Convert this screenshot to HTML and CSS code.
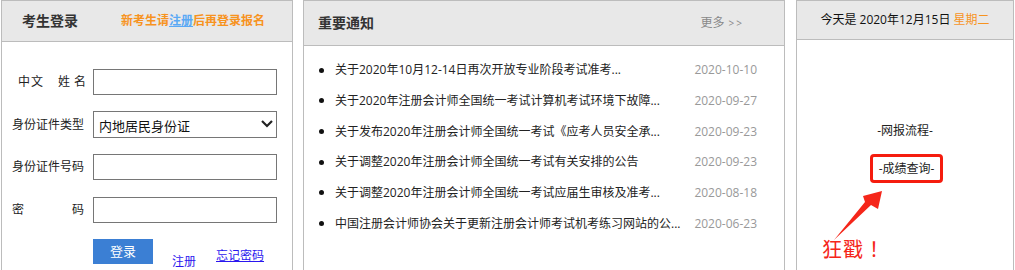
FILE: index.html
```html
<!DOCTYPE html>
<html lang="zh-CN">
<head>
<meta charset="utf-8">
<title>考生登录</title>
<link rel="stylesheet" href="styles.css">
</head>
<body>
<div class="page">
  <section class="panel p-login">
    <div class="hd hd-login">
      <span class="hd-title">考生登录</span>
      <span class="hd-tip">新考生请<a class="reg-link">注册</a>后再登录报名</span>
    </div>
    <form class="login-form">
      <div class="row">
        <label class="lbl lbl-name"><span>中</span><span class="c2">文</span><span class="c3">姓</span><span class="c4">名</span></label>
        <input class="field" type="text">
      </div>
      <div class="row row-sel">
        <label class="lbl">身份证件类型</label>
        <div class="sel-wrap">
          <select class="field sel"><option>内地居民身份证</option></select>
          <svg class="chev" width="14" height="9" viewBox="0 0 14 9"><polyline points="2,2 7,7 12,2" fill="none" stroke="#222" stroke-width="2.2"/></svg>
        </div>
      </div>
      <div class="row row-id">
        <label class="lbl">身份证件号码</label>
        <input class="field" type="text">
      </div>
      <div class="row">
        <label class="lbl lbl-pw"><span>密</span><span>码</span></label>
        <input class="field" type="password">
      </div>
      <div class="actions">
        <button class="btn" type="button">登录</button>
        <a class="lnk lnk-reg">注册</a>
        <a class="lnk lnk-forgot">忘记密码</a>
      </div>
    </form>
  </section>

  <section class="panel p-news">
    <div class="hd hd-news">
      <span class="hd-title">重要通知</span>
      <span class="more">更多 <span class="arrows">&gt;&gt;</span></span>
    </div>
    <ul class="news">
      <li><span class="t">关于2020年10月12-14日再次开放专业阶段考试准考...</span><span class="d">2020-10-10</span></li>
      <li><span class="t">关于2020年注册会计师全国统一考试计算机考试环境下故障...</span><span class="d">2020-09-27</span></li>
      <li><span class="t">关于发布2020年注册会计师全国统一考试《应考人员安全承...</span><span class="d">2020-09-23</span></li>
      <li><span class="t">关于调整2020年注册会计师全国统一考试有关安排的公告</span><span class="d">2020-09-23</span></li>
      <li><span class="t">关于调整2020年注册会计师全国统一考试应届生审核及准考...</span><span class="d">2020-08-18</span></li>
      <li><span class="t">中国注册会计师协会关于更新注册会计师考试机考练习网站的公...</span><span class="d">2020-06-23</span></li>
    </ul>
  </section>

  <section class="panel p-date">
    <div class="hd hd-date">今天是 2020年12月15日&nbsp;<span class="wk">星期二</span></div>
    <div class="flow">
      <div class="flow-item">-网报流程-</div>
      <div class="flow-item flow-hl"><span class="hl-box">-成绩查询-</span></div>
    </div>
    <svg class="arrow" width="218" height="270" viewBox="0 0 218 270">
      <polygon points="38,240 69,202 67,196 86,191 82,209 75,205" fill="#f5261a"/>
    </svg>
    <div class="poke">狂戳<span class="excl">！</span></div>
  </section>
</div>
</body>
</html>
```
FILE: styles.css
```css
html, body {
  margin: 0;
  padding: 0;
  overflow: hidden;
  background: #fff;
}
body {
  font-family: "Open Sans", "Noto Sans CJK SC", sans-serif;
  font-size: 12px;
  color: #222;
}
a { cursor: pointer; }

.page {
  display: flex;
  align-items: flex-start;
  padding-left: 1px;
}

.panel {
  box-sizing: border-box;
  border: 1px solid #bcbcbc;
  height: 300px;
  background: #fff;
}
.p-login { width: 292px; }
.p-news { width: 482px; margin-left: 10px; }
.p-date { width: 218px; margin-left: 11px; position: relative; }

.hd {
  background: #e8e8e8;
  border-bottom: 1px solid #bcbcbc;
  display: flex;
  align-items: center;
}
.hd-title {
  font-size: 14px;
  font-weight: bold;
  color: #333;
  line-height: 20px;
}

/* login */
.hd-login {
  height: 40px;
  padding-left: 20px;
  gap: 43px;
}
.hd-tip {
  font-size: 12px;
  font-weight: bold;
  color: #f7931e;
  line-height: 20px;
}
.reg-link {
  color: #5aa9f5;
  text-decoration: underline;
}

.login-form {
  display: flex;
  flex-direction: column;
  gap: 16px;
  padding-top: 27px;
  margin: 0;
}
.row {
  display: flex;
  align-items: center;
  height: 26px;
  padding-left: 10px;
}
.row-sel { height: 27px; }
.row-id { margin-bottom: 1px; }
.lbl {
  width: 72px;
  margin-right: 9px;
  font-size: 12px;
  line-height: 16px;
  color: #222;
  white-space: nowrap;
}
.lbl-name {
  display: flex;
  padding-left: 6px;
  box-sizing: border-box;
}
.lbl-name .c2 { margin-left: 1px; }
.lbl-name .c3 { margin-left: 15px; }
.lbl-name .c4 { margin-left: 4px; }
.lbl-pw {
  display: flex;
  justify-content: space-between;
}
.field {
  box-sizing: border-box;
  width: 184px;
  height: 26px;
  border: 1px solid #767676;
  border-radius: 0;
  background: #fff;
  margin: 0;
  padding: 0 5px;
  font-family: inherit;
  font-size: 13px;
  outline: none;
}
.sel-wrap {
  position: relative;
  width: 184px;
  height: 27px;
}
.sel {
  height: 27px;
  -webkit-appearance: none;
  appearance: none;
  color: #111;
  padding-top: 3px;
}
.chev {
  position: absolute;
  right: 3px;
  top: 8px;
  pointer-events: none;
}

.actions {
  display: flex;
  align-items: flex-start;
  padding-left: 91px;
  height: 32px;
}
.btn {
  width: 60px;
  height: 25px;
  border: none;
  border-radius: 0;
  background: #3b7fd4;
  color: #fff;
  font-family: inherit;
  font-size: 13px;
  line-height: 25px;
  padding: 0;
}
.lnk {
  color: #2a16ee;
  font-size: 12px;
  line-height: 16px;
}
.lnk-reg { margin-left: 19px; margin-top: 15px; }
.lnk-forgot { margin-left: 20px; margin-top: 9px; text-decoration: underline; }

/* news */
.hd-news {
  height: 44px;
  padding: 0 40px 0 14px;
  justify-content: space-between;
}
.more {
  color: #888;
  font-size: 12px;
  line-height: 16px;
}
.arrows {
  font-size: 10px;
  letter-spacing: 2px;
  margin-left: 1px;
}
.news {
  list-style: none;
  margin: 0;
  padding: 9px 27px 0 15px;
}
.news li {
  display: flex;
  align-items: center;
  height: 30.67px;
  font-size: 12px;
  line-height: 16px;
}
.news li::before {
  content: "";
  width: 5px;
  height: 5px;
  border-radius: 50%;
  background: #111;
  margin-right: 11px;
  flex: none;
}
.news .t {
  flex: 1;
  color: #222;
  white-space: nowrap;
  overflow: hidden;
}
.news .d {
  color: #999;
  margin-left: 10px;
  white-space: nowrap;
}

/* date panel */
.hd-date {
  height: 38px;
  justify-content: center;
  font-size: 12px;
  line-height: 16px;
  color: #111;
  white-space: nowrap;
}
.wk { color: #f7931e; }
.flow {
  text-align: center;
  padding-top: 81px;
  font-size: 12px;
  color: #222;
}
.flow-item {
  line-height: 20px;
  height: 20px;
}
.flow-hl {
  margin-top: 13px;
  height: auto;
  padding-left: 3px;
}
.hl-box {
  display: inline-block;
  border: 3px solid #f51c0e;
  border-radius: 4px;
  padding: 4px 6px;
  line-height: 15px;
}
.arrow {
  position: absolute;
  left: -1px;
  top: -1px;
}
.poke {
  position: absolute;
  left: 25px;
  top: 236px;
  font-size: 20px;
  line-height: 24px;
  letter-spacing: 1px;
  color: #f5261a;
  font-family: "Noto Sans CJK TC", "Noto Sans CJK SC", sans-serif;
  white-space: nowrap;
}
.excl {
  display: inline-block;
}
```
